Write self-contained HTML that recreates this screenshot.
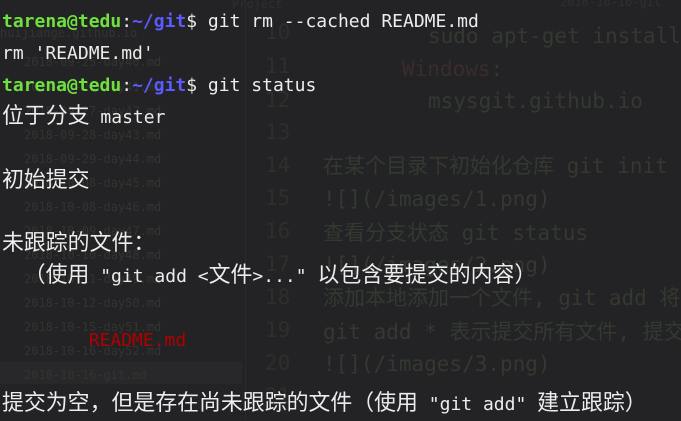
<!DOCTYPE html>
<html><head><meta charset="utf-8"><style>
body{margin:0;width:681px;height:420px;background:#232325;overflow:hidden;position:relative;font-family:"DejaVu Sans Mono","Liberation Mono","Noto Sans CJK SC",monospace}
.g{position:absolute;white-space:pre;color:#333930;font-size:21px;line-height:24px}
.f{position:absolute;white-space:pre;color:#30362f;font-size:12px;left:24px}
.n{position:absolute;color:#2d2f2d;font-size:21px;left:265px}
#t{position:absolute;left:2px;top:6px;font-size:18px;line-height:31.9px;color:#ececec;white-space:pre}
c{font-size:21.9px;font-family:"Noto Sans CJK SC",sans-serif;line-height:10px}
.gr{color:#6fe03c;font-weight:bold}.bl{color:#5a5aff;font-weight:bold}.rd{color:#b00000}
</style></head><body>
<div style="position:absolute;left:245px;top:0;width:1px;height:420px;background:#2a2a2c"></div>
<div style="position:absolute;left:0;top:362px;width:242px;height:22px;background:#28282a"></div>
<div class="f" style="top:-3px;left:232px;color:#2e302e">Project</div>
<div class="f" style="top:-5px;left:560px;color:#2e302e">2018-10-16-git</div>
<div class="f" style="top:26px;left:0">huijiange.github.io</div>
<div class="f" style="top:55px">2018-09-25-day40.md</div>
<div class="f" style="top:80px">2018-09-26-day41.md</div>
<div class="f" style="top:104px">2018-09-27-day42.md</div>
<div class="f" style="top:128px">2018-09-28-day43.md</div>
<div class="f" style="top:152px">2018-09-29-day44.md</div>
<div class="f" style="top:176px">2018-10-08-day45.md</div>
<div class="f" style="top:200px">2018-10-08-day46.md</div>
<div class="f" style="top:224px">2018-10-09-day47.md</div>
<div class="f" style="top:248px">2018-10-10-day48.md</div>
<div class="f" style="top:272px">2018-10-11-day49.md</div>
<div class="f" style="top:296px">2018-10-12-day50.md</div>
<div class="f" style="top:320px">2018-10-15-day51.md</div>
<div class="f" style="top:344px">2018-10-16-day52.md</div>
<div class="f" style="top:368px">2018-10-16-git.md</div>
<div class="n" style="top:20px">10</div><div class="n" style="top:54px">11</div><div class="n" style="top:88px">12</div><div class="n" style="top:120px">13</div><div class="n" style="top:153px">14</div><div class="n" style="top:186px">15</div><div class="n" style="top:219px">16</div><div class="n" style="top:252px">17</div><div class="n" style="top:285px">18</div><div class="n" style="top:318px">19</div><div class="n" style="top:351px">20</div><div class="n" style="top:384px">21</div>
<div class="g" style="left:428px;top:24px">sudo apt-get install</div>
<div class="g" style="left:402px;top:57px;color:#3a2c2c">Windows<span style="color:#333930">:</span></div>
<div class="g" style="left:428px;top:89px">msysgit.github.io</div>
<div class="g" style="left:323px;top:154px">在某个目录下初始化仓库 git init</div>
<div class="g" style="left:323px;top:187px">![](/images/1.png)</div>
<div class="g" style="left:323px;top:221px">查看分支状态 git status</div>
<div class="g" style="left:323px;top:253px">![](/images/2.png)</div>
<div class="g" style="left:323px;top:286px">添加本地添加一个文件, git add 将</div>
<div class="g" style="left:323px;top:320px">git add * 表示提交所有文件, 提交</div>
<div class="g" style="left:323px;top:352px">![](/images/3.png)</div>
<div id="t"><span class="gr">tarena@tedu</span>:<span class="bl">~/git</span>$ git rm --cached README.md
rm 'README.md'
<span class="gr">tarena@tedu</span>:<span class="bl">~/git</span>$ git status
<c>位于分支</c> master

<c>初始提交</c>

<c>未跟踪的文件：</c>
  <c>（使用</c> "git add &lt;<c>文件</c>&gt;..." <c>以包含要提交的内容）</c>

	<span class="rd">README.md</span>

<c>提交为空，但是存在尚未跟踪的文件（使用</c> "git add" <c>建立跟踪）</c></div>
</body></html>
